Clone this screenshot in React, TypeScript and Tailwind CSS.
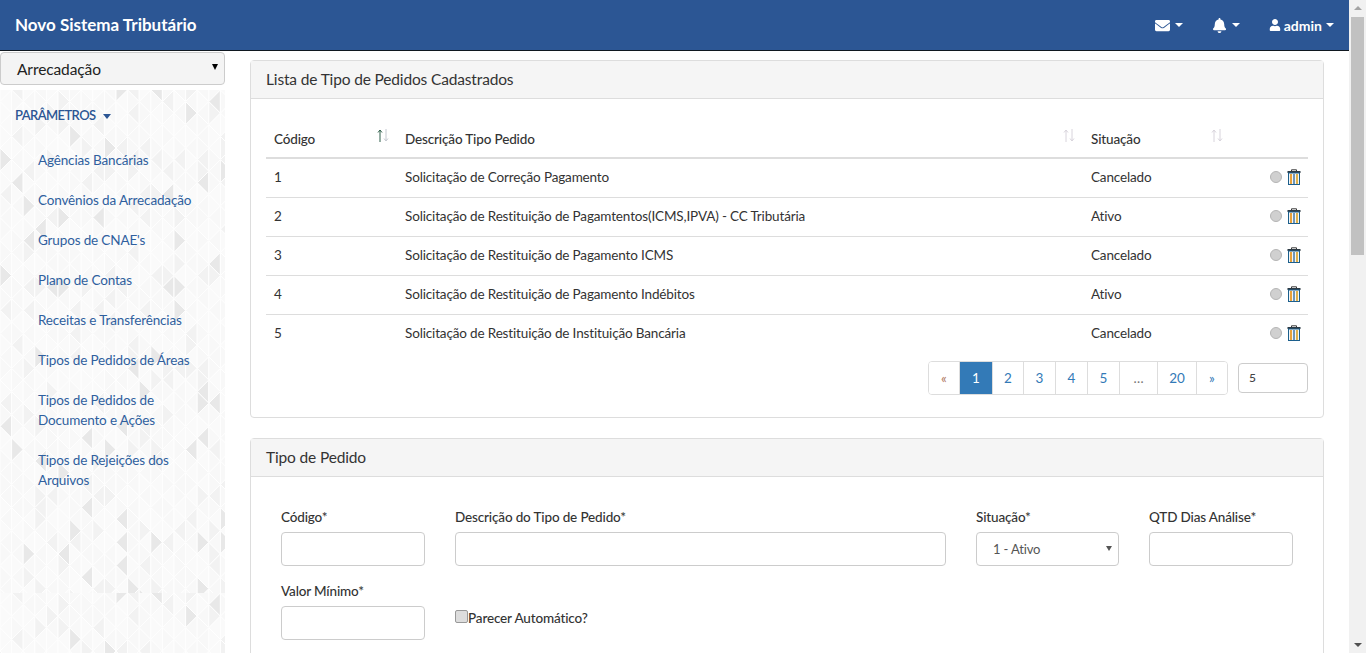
import { FaEnvelope, FaBell, FaUser } from "react-icons/fa";

const font = { fontFamily: '"Lato", "Liberation Sans", sans-serif' };

function buildTile() {
  const w = 11.6, h = 23.2;
  const cols = 20, rows = 22;
  const polys: { p: string; f: string }[] = [];
  const rnd = (a: number, b: number) => {
    const s = Math.sin(a * 12.9898 + b * 78.233) * 43758.5453;
    return s - Math.floor(s);
  };
  for (let c = 0; c < cols; c++) {
    for (let r = -1; r < rows * 2 + 1; r++) {
      const x0 = c * w;
      const x1 = x0 + w;
      const y = (r * h) / 2;
      const right = (c + r + 2) % 2 === 0;
      const pts = right
        ? `${x0},${y - h / 2} ${x0},${y + h / 2} ${x1},${y}`
        : `${x1},${y - h / 2} ${x1},${y + h / 2} ${x0},${y}`;
      const v = rnd(c, r);
      const f = v > 0.95 ? "#e8e8e8" : v > 0.82 ? "#f2f2f2" : v > 0.4 ? "#f8f8f8" : "#fafafa";
      polys.push({ p: pts, f });
    }
  }
  return polys;
}

const tile = buildTile();

function Pattern() {
  return (
    <svg className="absolute left-0 top-[39px] z-0" width="225" height="563" aria-hidden="true">
      <defs>
        <pattern id="tri" width="225" height="503" patternUnits="userSpaceOnUse">
          <rect width="225" height="503" fill="#fbfbfb" />
          {tile.map((t, i) => (
            <polygon key={i} points={t.p} fill={t.f} stroke="#ffffff" strokeWidth="1" />
          ))}
        </pattern>
      </defs>
      <rect width="225" height="563" fill="url(#tri)" />
    </svg>
  );
}

function Caret() {
  return <span className="inline-block w-0 h-0 border-x-[4px] border-x-transparent border-t-[4px] border-t-white" />;
}

function SortIcon({ active = false }: { active?: boolean }) {
  return (
    <svg width="12" height="13" viewBox="0 0 12 13" aria-hidden="true">
      <path d="M3 13V1M1 3.5 3 1 5 3.5" fill="none" stroke={active ? "#2f5f4a" : "#d8d4dc"} strokeWidth="1" />
      <path d="M9 0V12M7 9.5 9 12 11 9.5" fill="none" stroke={active ? "#c4c8d0" : "#d8d4dc"} strokeWidth="1" />
    </svg>
  );
}

function Trash() {
  return (
    <svg width="14" height="16" viewBox="0 0 14 16" aria-hidden="true">
      <path d="M4.5 2V.8h5V2" fill="none" stroke="#3a3a3a" strokeWidth="1" />
      <rect x="0.5" y="2" width="13" height="2" fill="#2d3a44" />
      <rect x="1.5" y="4" width="11" height="11.5" fill="#f3f6f8" stroke="#1c5f8c" strokeWidth="1" />
      <rect x="3" y="5" width="2" height="10" fill="#e9a23b" />
      <rect x="6" y="5" width="2" height="10" fill="#6f96b8" />
      <rect x="9" y="5" width="2" height="10" fill="#e0b24a" />
    </svg>
  );
}

const rows = [
  ["1", "Solicitação de Correção Pagamento", "Cancelado"],
  ["2", "Solicitação de Restituição de Pagamtentos(ICMS,IPVA) - CC Tributária", "Ativo"],
  ["3", "Solicitação de Restituição de Pagamento ICMS", "Cancelado"],
  ["4", "Solicitação de Restituição de Pagamento Indébitos", "Ativo"],
  ["5", "Solicitação de Restituição de Instituição Bancária", "Cancelado"],
];

const links = [
  "Agências Bancárias",
  "Convênios da Arrecadação",
  "Grupos de CNAE's",
  "Plano de Contas",
  "Receitas e Transferências",
  "Tipos de Pedidos de Áreas",
  "Tipos de Pedidos de Documento e Ações",
  "Tipos de Rejeições dos Arquivos",
];

const pages: { t: string; w: string; c: string }[] = [
  { t: "«", w: "w-[30px]", c: "text-[#b0795f] bg-white" },
  { t: "1", w: "w-[33px]", c: "text-white bg-[#337ab7]" },
  { t: "2", w: "w-[31px]", c: "text-[#337ab7] bg-white" },
  { t: "3", w: "w-[32px]", c: "text-[#337ab7] bg-white" },
  { t: "4", w: "w-[32px]", c: "text-[#337ab7] bg-white" },
  { t: "5", w: "w-[32px]", c: "text-[#337ab7] bg-white" },
  { t: "…", w: "w-[38px]", c: "text-[#777] bg-white" },
  { t: "20", w: "w-[39px]", c: "text-[#337ab7] bg-white" },
  { t: "»", w: "w-[31px]", c: "text-[#337ab7] bg-white" },
];

function Field({ label, w, children }: { label: string; w: string; children?: React.ReactNode }) {
  return (
    <div className={`${w} shrink-0`}>
      <div className="h-[20px] leading-[20px] text-[13.5px] tracking-[-0.15px] text-[#333] font-medium mb-[5px]">{label}</div>
      {children ?? <div className="h-[34px] rounded border border-[#ccc] bg-white" />}
    </div>
  );
}

export default function App() {
  return (
    <div className="flex h-[653px] w-[1366px] overflow-hidden bg-white" style={font}>
      <div className="w-[1349px] shrink-0 flex flex-col">
        <header className="h-[51px] shrink-0 bg-[#2c5694] border-b border-[#101820] flex items-center text-white">
          <div className="ml-[15px] text-[17px] font-bold">Novo Sistema Tributário</div>
          <div className="ml-auto flex items-center text-[14px] font-bold mr-[15px]">
            <span className="flex items-center gap-[5px] mr-[29px]">
              <FaEnvelope className="text-[15px]" />
              <Caret />
            </span>
            <span className="flex items-center gap-[5px] mr-[29px]">
              <FaBell className="text-[15px]" />
              <Caret />
            </span>
            <span className="flex items-center gap-[4px]">
              <span className="flex items-center gap-[3px]">
                <FaUser className="text-[12px]" />
                admin
              </span>
              <Caret />
            </span>
          </div>
        </header>
        <div className="flex flex-1 min-h-0">
          <aside className="relative w-[225px] shrink-0">
            <Pattern />
            <div className="relative z-10">
              <div className="relative h-[33px] mt-[1px] rounded border border-[#ccc] bg-[#f4f4f4] flex items-center pl-[16px] pt-[2px] text-[15.5px] tracking-[-0.1px] text-[#222]">
                Arrecadação
                <span className="absolute right-[6px] top-[11px] w-0 h-0 border-x-[3.5px] border-x-transparent border-t-[6px] border-t-black" />
              </div>
              <div className="mt-[21px] pl-[15px] h-[20px] flex items-center gap-[7px] text-[13px] tracking-[-0.6px] font-semibold text-[#2c5694]">
                PARÂMETROS
                <span className="inline-block w-0 h-0 border-x-[4.5px] border-x-transparent border-t-[5px] border-t-[#2c5694]" />
              </div>
              <ul className="mt-[14px] pl-[38px] pr-[20px] text-[13.5px] tracking-[-0.15px] leading-[20px] text-[#2f5f9e]">
                {links.map((l) => (
                  <li key={l} className="py-[10px]">
                    {l}
                  </li>
                ))}
              </ul>
            </div>
          </aside>
          <main className="flex-1 min-w-0 pl-[25px] pr-[25px] pt-[9px] overflow-hidden">
            <section className="rounded border border-[#ddd] h-[358px]">
              <div className="h-[38px] bg-[#f5f5f5] border-b border-[#ddd] px-[15px] flex items-center text-[15.5px] tracking-[-0.15px] text-[#333]">
                Lista de Tipo de Pedidos Cadastrados
              </div>
              <div className="px-[15px] pt-[20px]">
                <table className="w-[1042px] table-fixed text-[13.5px] tracking-[-0.15px] text-[#333] border-collapse">
                  <thead>
                    <tr className="h-[39px] border-b-2 border-[#ddd]">
                      <th className="w-[131px] px-[8px] pt-[2px] text-left font-medium relative">
                        Código
                        <span className="absolute right-[8px] top-[10px]"><SortIcon active /></span>
                      </th>
                      <th className="w-[686px] px-[8px] pt-[2px] text-left font-medium relative">
                        Descrição Tipo Pedido
                        <span className="absolute right-[8px] top-[10px]"><SortIcon /></span>
                      </th>
                      <th className="w-[140px] px-[8px] pt-[2px] text-left font-medium relative">
                        Situação
                        <span className="absolute right-0 top-[10px]"><SortIcon /></span>
                      </th>
                      <th />
                    </tr>
                  </thead>
                  <tbody>
                    {rows.map((r) => (
                      <tr key={r[0]} className="h-[39px] border-b border-[#ddd] last:border-b-0">
                        <td className="px-[8px] pb-[1px]">{r[0]}</td>
                        <td className="px-[8px] pb-[1px]">{r[1]}</td>
                        <td className="px-[8px] pb-[1px]">{r[2]}</td>
                        <td className="pr-[7px] pb-[1px]">
                          <div className="flex items-center justify-end gap-[5px]">
                            <span className="w-[12px] h-[12px] rounded-full bg-[#d0d0d0] border border-[#b5b5b5]" />
                            <Trash />
                          </div>
                        </td>
                      </tr>
                    ))}
                  </tbody>
                </table>
                <div className="flex justify-end items-center mt-[8px]">
                  <div className="flex h-[34px] rounded border border-[#ddd] overflow-hidden text-[13.5px]">
                    {pages.map((p, i) => (
                      <span key={i} className={`${p.w} ${p.c} flex items-center justify-center border-l border-[#ddd] first:border-l-0`}>
                        {p.t}
                      </span>
                    ))}
                  </div>
                  <div className="ml-[10px] w-[70px] h-[30px] rounded border border-[#ccc] flex items-center pl-[10px] text-[12px] font-medium text-[#444]">
                    5
                  </div>
                </div>
              </div>
            </section>
            <section className="mt-[20px] rounded-t border border-[#ddd] h-[400px]">
              <div className="h-[38px] bg-[#f5f5f5] border-b border-[#ddd] px-[15px] flex items-center text-[15.5px] tracking-[-0.15px] text-[#333]">
                Tipo de Pedido
              </div>
              <div className="pl-[30px] pt-[30px]">
                <div className="flex gap-[30px] h-[74px]">
                  <Field label="Código*" w="w-[144px]" />
                  <Field label="Descrição do Tipo de Pedido*" w="w-[491px]" />
                  <Field label="Situação*" w="w-[143px]">
                    <div className="relative h-[34px] rounded border border-[#ccc] bg-white flex items-center pl-[16px] pt-[1px] text-[13px] tracking-[-0.15px] text-[#555]">
                      1 - Ativo
                      <span className="absolute right-[6px] top-[13px] w-0 h-0 border-x-[3px] border-x-transparent border-t-[5px] border-t-[#555]" />
                    </div>
                  </Field>
                  <Field label="QTD Dias Análise*" w="w-[144px]" />
                </div>
                <div className="flex gap-[30px]">
                  <Field label="Valor Mínimo*" w="w-[144px]" />
                  <div className="flex items-start pt-[27px] text-[13.5px] tracking-[-0.15px] font-medium text-[#333]">
                    <span className="mt-[2px] w-[13px] h-[13px] rounded-[2px] border border-[#999] bg-[#ddd]" />
                    <span className="leading-[20px]">Parecer Automático?</span>
                  </div>
                </div>
              </div>
            </section>
          </main>
        </div>
      </div>
      <div className="w-[17px] shrink-0 bg-[#f1f1f1] flex flex-col items-center">
        <span className="mt-[6px] w-0 h-0 border-x-[4px] border-x-transparent border-b-[4px] border-b-[#a3a3a3]" />
        <div className="mt-[7px] w-[13px] h-[238px] bg-[#c1c1c1]" />
        <span className="mt-auto mb-[6px] w-0 h-0 border-x-[4px] border-x-transparent border-t-[4px] border-t-[#505050]" />
      </div>
    </div>
  );
}
